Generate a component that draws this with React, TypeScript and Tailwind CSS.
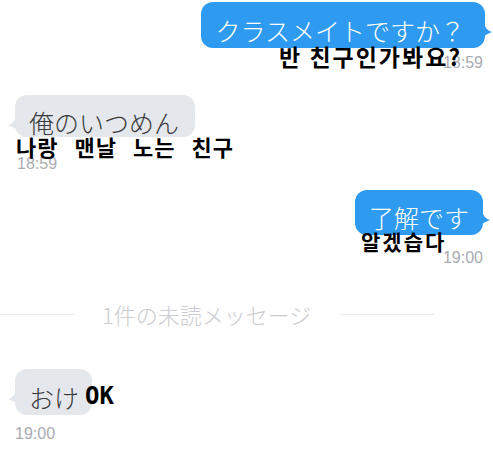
import React from "react";

function TailRight() {
  return (
    <svg className="absolute right-[-7px] top-[20px]" width="8" height="14" viewBox="0 0 8 14">
      <path d="M0 0 Q1 8 8 10 Q3 12 0 14 Z" fill="#2f9bf0" />
    </svg>
  );
}

function TailLeft() {
  return (
    <svg className="absolute left-[-7px] top-[20px]" width="8" height="14" viewBox="0 0 8 14">
      <path d="M8 0 Q7 8 0 10 Q5 12 8 14 Z" fill="#e4e7ec" />
    </svg>
  );
}

const JP = "font-['Noto_Sans_CJK_JP','Noto_Sans',sans-serif] font-light";
const KR = "font-['Noto_Sans_CJK_KR','Noto_Sans',sans-serif] font-bold text-black whitespace-nowrap absolute";
const TIME = "font-['Liberation_Sans',Arial,sans-serif] text-[16px] leading-[16px] text-[#a9acb1]";

export default function App() {
  return (
    <div className="w-[493px] h-[466px] bg-white overflow-hidden flex flex-col">
      {/* Message 1 */}
      <div className="relative flex flex-col items-end pr-[8px] pt-[2px]">
        <div
          className={`${JP} relative h-[46px] rounded-[12px] bg-[#2f9bf0] pl-[14px] pr-[20px] pt-[16px] text-[25px] leading-[25px] text-white whitespace-nowrap`}
        >
          クラスメイトですか？
          <TailRight />
        </div>
        <div className={`${TIME} mt-[7px] pr-[2px]`}>18:59</div>
        <div className={`${KR} left-[279px] top-[45px] text-[23px] leading-[23px] tracking-[2px]`}>
          반 친구인가봐요?
        </div>
      </div>

      {/* Message 2 */}
      <div className="relative mt-[24px] flex flex-col items-start pl-[15px]">
        <div
          className={`${JP} relative h-[42px] rounded-[12px] bg-[#e4e7ec] pl-[14px] pr-[16px] pt-[15px] text-[25px] leading-[25px] text-[#3a3a3c] whitespace-nowrap`}
        >
          俺のいつめん
          <TailLeft />
        </div>
        <div className={`${TIME} mt-[19px] ml-[2px]`}>18:59</div>
        <div className={`${KR} left-[16px] top-[40px] text-[22px] leading-[22px] tracking-[1px] [word-spacing:10px]`}>
          나랑 맨날 노는 친구
        </div>
      </div>

      {/* Message 3 */}
      <div className="relative mt-[18px] flex flex-col items-end pr-[10px]">
        <div
          className={`${JP} relative h-[45px] rounded-[12px] bg-[#2f9bf0] pl-[14px] pr-[14px] pt-[15px] text-[25px] leading-[25px] text-white whitespace-nowrap`}
        >
          了解です
          <TailRight />
        </div>
        <div className={`${TIME} mt-[15px]`}>19:00</div>
        <div className={`${KR} left-[361px] top-[41px] text-[21px] leading-[21px] tracking-[2px]`}>
          알겠습다
        </div>
      </div>

      {/* Divider */}
      <div className="mt-[37px] flex items-center">
        <div className="h-px w-[75px] bg-[#ececee]" />
        <div className={`${JP} ml-[27px] text-[22px] leading-[22px] text-[#cbccd0] whitespace-nowrap`}>
          1件の未読メッセージ
        </div>
        <div className="ml-[28px] h-px w-[95px] bg-[#ececee]" />
      </div>

      {/* Message 4 */}
      <div className="relative mt-[44px] flex flex-col items-start pl-[15px]">
        <div
          className={`${JP} relative h-[46px] rounded-[12px] bg-[#e4e7ec] pl-[14px] pr-[13px] pt-[16px] text-[25px] leading-[25px] text-[#3a3a3c] whitespace-nowrap`}
        >
          おけ
          <TailLeft />
        </div>
        <div className={`${TIME} mt-[11px]`}>19:00</div>
        <div className="absolute left-[85px] top-[15px] font-['DejaVu_Sans_Mono',monospace] text-[24px] leading-[24px] font-bold text-black whitespace-nowrap">
          OK
        </div>
      </div>
    </div>
  );
}
